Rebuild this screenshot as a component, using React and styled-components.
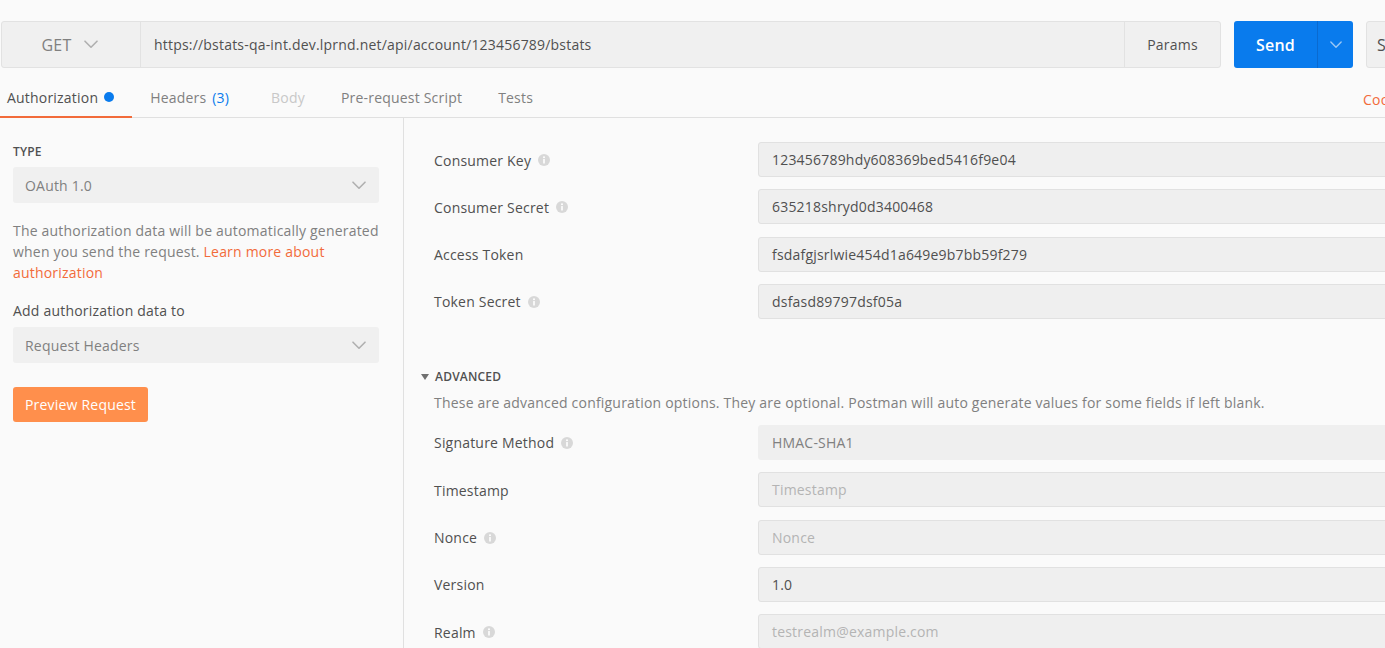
import React from "react";
import styled, { createGlobalStyle } from "styled-components";

const Global = createGlobalStyle`
  html, body { margin: 0; padding: 0; background: #fafafa; overflow: hidden; }
  body { font-family: "Open Sans", "Noto Sans", sans-serif; color: #505050; letter-spacing: 0.2px; }
  * { box-sizing: border-box; }
`;

const Page = styled.div`
  width: 1483px;
  height: 648px;
  overflow: hidden;
  background: #fafafa;
`;

const RequestBar = styled.div`
  display: flex;
  align-items: stretch;
  height: 68px;
  padding: 21px 17px 0 1px;
`;

const UrlGroup = styled.div`
  flex: 1;
  display: flex;
  height: 47px;
  border: 1px solid #e2e2e2;
  border-radius: 3px;
  background: #f0f0f0;
  overflow: hidden;
`;

const Method = styled.div`
  width: 139px;
  display: flex;
  align-items: center;
  justify-content: center;
  gap: 13px;
  font-size: 16px;
  color: #808080;
  border-right: 1px solid #e2e2e2;
  padding-right: 2px;
`;

const UrlText = styled.div`
  flex: 1;
  display: flex;
  align-items: center;
  padding-left: 13px;
  font-size: 14px;
  color: #505050;
`;

const ParamsBtn = styled.div`
  width: 96px;
  display: flex;
  align-items: center;
  justify-content: center;
  font-size: 14px;
  color: #505050;
  border-left: 1px solid #e2e2e2;
`;

const SendGroup = styled.div`
  margin-left: 13px;
  width: 119px;
  height: 47px;
  display: flex;
  background: #097bed;
  border-radius: 3px;
  color: #fff;
`;

const SendLabel = styled.div`
  flex: 1;
  display: flex;
  align-items: center;
  justify-content: center;
  font-size: 16px;
  font-weight: 600;
`;

const SendCaret = styled.div`
  width: 36px;
  display: flex;
  align-items: center;
  justify-content: center;
  border-left: 1px solid #0a6ad0;
`;

const SaveBtn = styled.div`
  margin-left: 13px;
  width: 100px;
  height: 47px;
  display: flex;
  align-items: center;
  padding-left: 10px;
  font-size: 16px;
  color: #505050;
  background: #f0f0f0;
  border: 1px solid #e2e2e2;
  border-radius: 3px;
`;

const TabBar = styled.div`
  margin-top: 12px;
  display: flex;
  height: 38px;
  border-bottom: 1px solid #e0e0e0;
`;

const Tab = styled.div`
  display: flex;
  align-items: center;
  gap: 6px;
  padding: 0 18px 2px ${(p) => (p.$first ? "7px" : "18px")};
  font-size: 14px;
  color: ${(p) => (p.$active ? "#505050" : p.$disabled ? "#c8c8c8" : "#808080")};
  border-bottom: 2px solid ${(p) => (p.$active ? "#f26b3a" : "transparent")};
  margin-bottom: -1px;
`;

const Dot = styled.span`
  width: 10px;
  height: 10px;
  border-radius: 50%;
  background: #097bed;
`;

const Count = styled.span`
  color: #097bed;
  margin: 0 6px 0 2px;
`;

const RightLinks = styled.div`
  margin-left: auto;
  width: 120px;
  display: flex;
  align-items: center;
  gap: 16px;
  font-size: 14px;
  color: #f26b3a;
  padding-top: 2px;
`;

const Content = styled.div`
  display: flex;
  height: 530px;
`;

const LeftPanel = styled.div`
  width: 404px;
  flex-shrink: 0;
  border-right: 1px solid #e0e0e0;
  padding: 25px 24px 0 13px;
`;

const SectionLabel = styled.div`
  font-size: 12px;
  font-weight: 600;
  color: #505050;
  line-height: 18px;
  text-transform: uppercase;
  margin-bottom: 6px;
`;

const Select = styled.div`
  height: 36px;
  display: flex;
  align-items: center;
  justify-content: space-between;
  padding: 0 13px 0 12px;
  background: #f0f0f0;
  border-radius: 3px;
  font-size: 14px;
  color: #808080;
`;

const Help = styled.p`
  margin: 17px 0 0;
  font-size: 14px;
  line-height: 21px;
  color: #808080;
`;

const Link = styled.span`
  color: #f26b3a;
`;

const FieldLabel = styled.div`
  margin-top: 18px;
  margin-bottom: 6px;
  font-size: 14px;
  line-height: 20px;
  color: #505050;
`;

const PreviewBtn = styled.div`
  display: inline-flex;
  align-items: center;
  margin-top: 24px;
  height: 35px;
  padding: 0 12px;
  background: #ff8f4c;
  border-radius: 3px;
  color: #fff;
  font-size: 14px;
`;

const RightPanel = styled.div`
  flex: 1;
  padding: 24px 0 0 17px;
`;

const Rows = styled.div`
  display: flex;
  flex-direction: column;
  gap: 12.33px;
  padding-left: 13px;
`;

const Row = styled.div`
  display: grid;
  grid-template-columns: 324px 1fr;
  align-items: center;
  height: 35px;
`;

const Label = styled.div`
  display: flex;
  align-items: center;
  gap: 7px;
  font-size: 14px;
  color: #505050;
  padding-top: 1px;
`;

const Input = styled.div`
  height: 35px;
  display: flex;
  align-items: center;
  padding-left: 13px;
  background: #efefef;
  border: 1px solid ${(p) => (p.$plain ? "#efefef" : "#e1e1e1")};
  border-radius: 3px;
  font-size: 14px;
  color: ${(p) => (p.$placeholder ? "#b4b4b4" : p.$muted ? "#808080" : "#505050")};
`;

const AdvancedHeader = styled.div`
  margin-top: 49px;
  display: flex;
  align-items: center;
  gap: 6px;
  font-size: 12px;
  font-weight: 600;
  color: #505050;
  line-height: 18px;
`;

const AdvancedNote = styled.div`
  margin: 7px 0 12px 13px;
  font-size: 14px;
  line-height: 20px;
  color: #808080;
`;

const Chevron = ({ color = "#b0b0b0", size = 14 }) => (
  <svg width={size} height={size * 0.6} viewBox="0 0 14 8" fill="none">
    <polyline points="1,1 7,7 13,1" stroke={color} strokeWidth="1.6" strokeLinecap="round" strokeLinejoin="round" />
  </svg>
);

const Info = () => (
  <svg width="12" height="12" viewBox="0 0 12 12">
    <circle cx="6" cy="6" r="6" fill="#d8d8d8" />
    <circle cx="6" cy="3.3" r="1" fill="#fff" />
    <rect x="5.2" y="5" width="1.6" height="4.6" rx="0.5" fill="#fff" />
  </svg>
);

const Caret = () => (
  <svg width="8" height="6" viewBox="0 0 8 6">
    <polygon points="0,0 8,0 4,6" fill="#707070" />
  </svg>
);

const mainFields = [
  { label: "Consumer Key", info: true, value: "123456789hdy608369bed5416f9e04" },
  { label: "Consumer Secret", info: true, value: "635218shryd0d3400468" },
  { label: "Access Token", info: false, value: "fsdafgjsrlwie454d1a649e9b7bb59f279" },
  { label: "Token Secret", info: true, value: "dsfasd89797dsf05a" },
];

const advFields = [
  { label: "Signature Method", info: true, value: "HMAC-SHA1", plain: true, muted: true },
  { label: "Timestamp", info: false, value: "Timestamp", placeholder: true },
  { label: "Nonce", info: true, value: "Nonce", placeholder: true },
  { label: "Version", info: false, value: "1.0" },
  { label: "Realm", info: true, value: "testrealm@example.com", placeholder: true },
];

const FieldRow = ({ f }) => (
  <Row>
    <Label>
      {f.label}
      {f.info && <Info />}
    </Label>
    <Input $plain={f.plain} $muted={f.muted} $placeholder={f.placeholder}>
      {f.value}
    </Input>
  </Row>
);

export default function App() {
  return (
    <Page>
      <Global />
      <RequestBar>
        <UrlGroup>
          <Method>
            GET <Chevron />
          </Method>
          <UrlText>https://bstats-qa-int.dev.lprnd.net/api/account/123456789/bstats</UrlText>
          <ParamsBtn>Params</ParamsBtn>
        </UrlGroup>
        <SendGroup>
          <SendLabel>Send</SendLabel>
          <SendCaret>
            <Chevron color="#9cc8f5" size={12} />
          </SendCaret>
        </SendGroup>
        <SaveBtn>Save</SaveBtn>
      </RequestBar>

      <TabBar>
        <Tab $first $active>
          Authorization <Dot />
        </Tab>
        <Tab>
          <span>
            Headers<Count> (3)</Count>
          </span>
        </Tab>
        <Tab $disabled>Body</Tab>
        <Tab>Pre-request Script</Tab>
        <Tab>Tests</Tab>
        <RightLinks>
          <span>Cookies</span>
          <span>Code</span>
        </RightLinks>
      </TabBar>

      <Content>
        <LeftPanel>
          <SectionLabel>Type</SectionLabel>
          <Select>
            OAuth 1.0 <Chevron />
          </Select>
          <Help>
            The authorization data will be automatically generated when you send the request.{" "}
            <Link>Learn more about authorization</Link>
          </Help>
          <FieldLabel>Add authorization data to</FieldLabel>
          <Select>
            Request Headers <Chevron />
          </Select>
          <PreviewBtn>Preview Request</PreviewBtn>
        </LeftPanel>

        <RightPanel>
          <Rows>
            {mainFields.map((f) => (
              <FieldRow key={f.label} f={f} />
            ))}
          </Rows>
          <AdvancedHeader>
            <Caret /> ADVANCED
          </AdvancedHeader>
          <AdvancedNote>
            These are advanced configuration options. They are optional. Postman will auto generate values for some fields if left blank.
          </AdvancedNote>
          <Rows>
            {advFields.map((f) => (
              <FieldRow key={f.label} f={f} />
            ))}
          </Rows>
        </RightPanel>
      </Content>
    </Page>
  );
}
